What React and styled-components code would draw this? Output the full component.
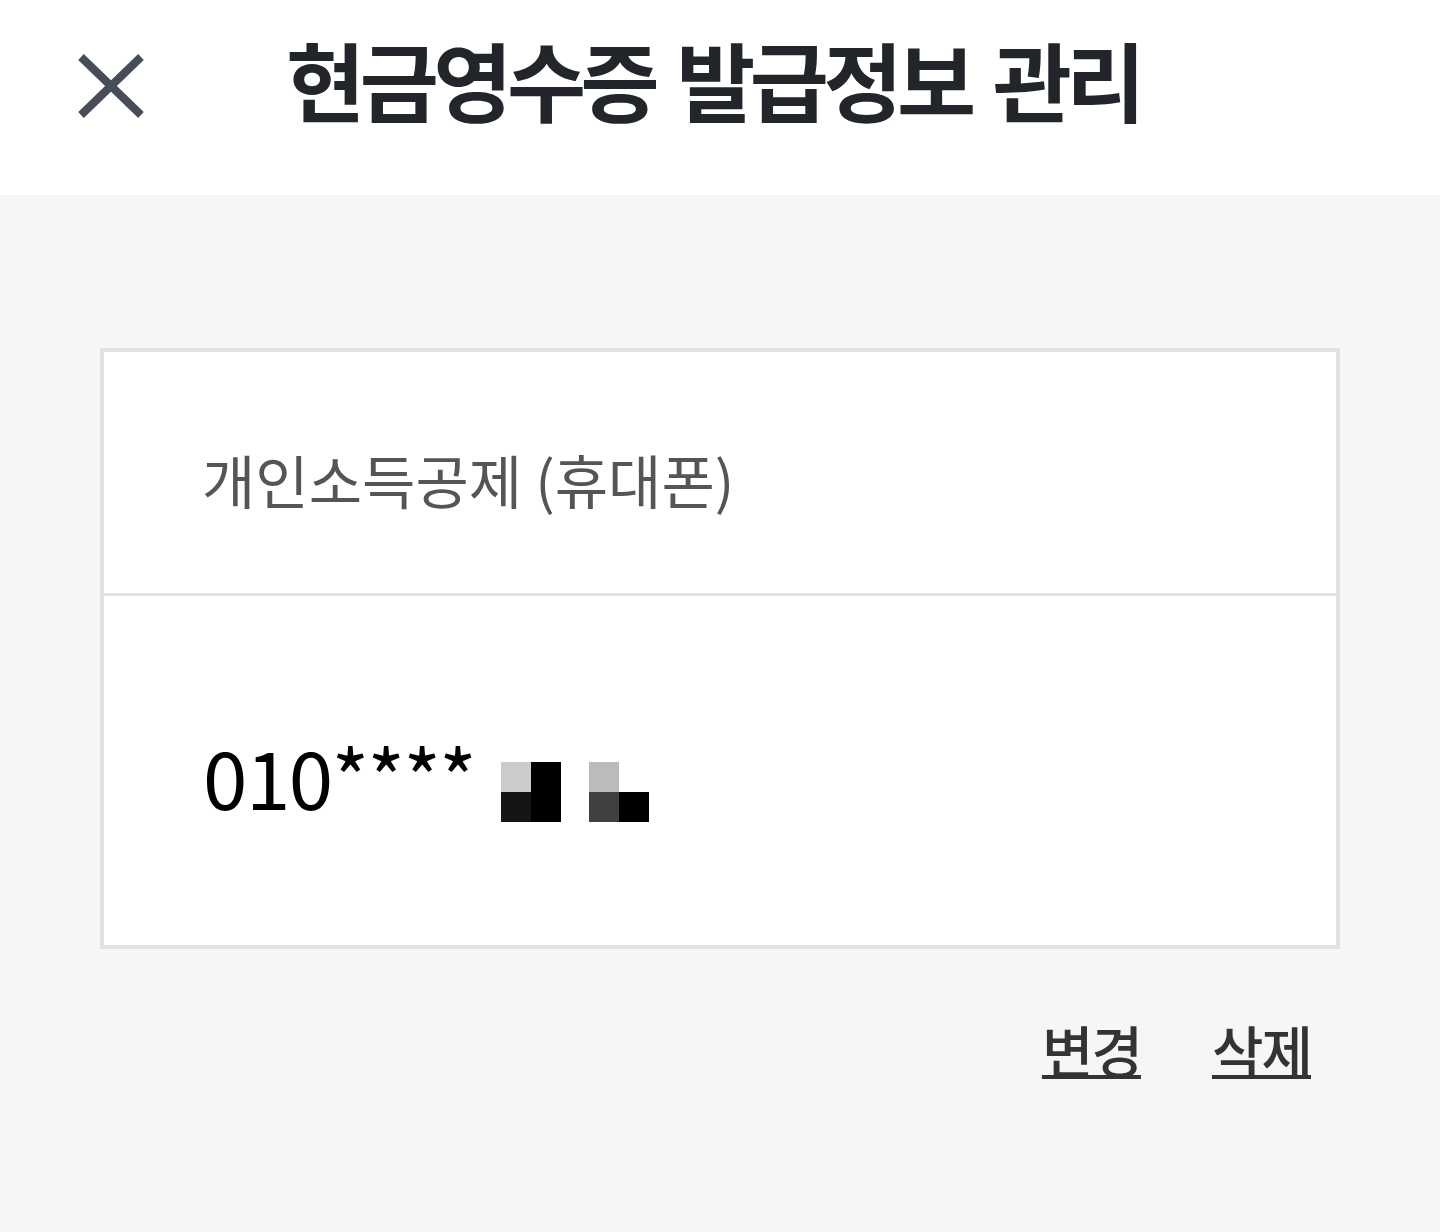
import React from "react";
import styled, { createGlobalStyle } from "styled-components";

const GlobalStyle = createGlobalStyle`
  html, body {
    margin: 0;
    padding: 0;
    background: #f6f6f6;
  }
  body {
    font-family: "Noto Sans CJK KR", "Noto Sans", sans-serif;
  }
`;

// blurred tail of the phone number, as 2x2 blocks
const MOSAIC = [
  ["#cccccc", "#000000", "#151515", "#000000"],
  ["#bbbbbb", "#ffffff", "#404040", "#000000"],
];

const App = () => {
  return (
    <Page>
      <GlobalStyle />
      <Header>
        <CloseButton aria-label="닫기">
          <svg width="66" height="64" viewBox="0 0 66 64">
            <path d="M3 3 L63 61 M63 3 L3 61" stroke="#474d56" strokeWidth="8" fill="none" />
          </svg>
        </CloseButton>
        <Title>현금영수증 발급정보 관리</Title>
      </Header>
      <Content>
        <Card>
          <TypeRow>개인소득공제 (휴대폰)</TypeRow>
          <NumberRow>
            <Number>010****</Number>
            {MOSAIC.map((cells, i) => (
              <Mosaic key={i}>
                {cells.map((c, j) => (
                  <Cell key={j} $color={c} />
                ))}
              </Mosaic>
            ))}
          </NumberRow>
        </Card>
        <Actions>
          <TextButton>변경</TextButton>
          <TextButton>삭제</TextButton>
        </Actions>
      </Content>
    </Page>
  );
};

const Page = styled.div`
  min-height: 1232px;
  background: #f6f6f6;
`;

const Header = styled.header`
  position: relative;
  height: 195px;
  background: #ffffff;
  display: flex;
  align-items: center;
  justify-content: center;
`;

const CloseButton = styled.button`
  position: absolute;
  left: 78px;
  top: 54px;
  padding: 0;
  border: none;
  background: none;
  display: flex;
`;

const Title = styled.h1`
  margin: 0 0 38px 0;
  font-size: 86px;
  font-weight: 700;
  letter-spacing: -5.5px;
  word-spacing: 8px;
  color: #222529;
  line-height: 1;
  transform: translateX(-7px);
`;

const Content = styled.main`
  padding: 153px 100px 0;
`;

const Card = styled.section`
  background: #ffffff;
  border: 4px solid #e2e2e2;
`;

const TypeRow = styled.div`
  height: 244px;
  border-bottom: 3px solid #e2e2e2;
  box-sizing: border-box;
  display: flex;
  align-items: center;
  padding: 12px 0 0 98px;
  font-size: 58px;
  color: #555555;
`;

const NumberRow = styled.div`
  height: 349px;
  display: flex;
  align-items: center;
  padding: 20px 0 0 99px;
  box-sizing: border-box;
`;

const Number = styled.span`
  font-size: 80px;
  color: #000000;
  letter-spacing: -1.5px;
  margin-right: 26px;
  line-height: 1;
  transform: translateY(-6px);
`;

const Mosaic = styled.div`
  display: grid;
  grid-template-columns: 30px 30px;
  grid-template-rows: 30px 30px;
  margin-right: 28px;
  margin-top: 22px;
`;

const Cell = styled.div`
  background: ${(p) => p.$color};
`;

const Actions = styled.div`
  display: flex;
  justify-content: flex-end;
  gap: 71px;
  padding: 66px 29px 0 0;
`;

const TextButton = styled.button`
  padding: 0;
  border: none;
  background: none;
  font-family: "Noto Sans CJK KR", "Noto Sans", sans-serif;
  font-size: 56px;
  font-weight: 500;
  color: #333333;
  text-decoration: underline;
  text-decoration-thickness: 4px;
  text-underline-offset: 2px;
  letter-spacing: -2px;
  line-height: 1.2;
`;

export default App;
